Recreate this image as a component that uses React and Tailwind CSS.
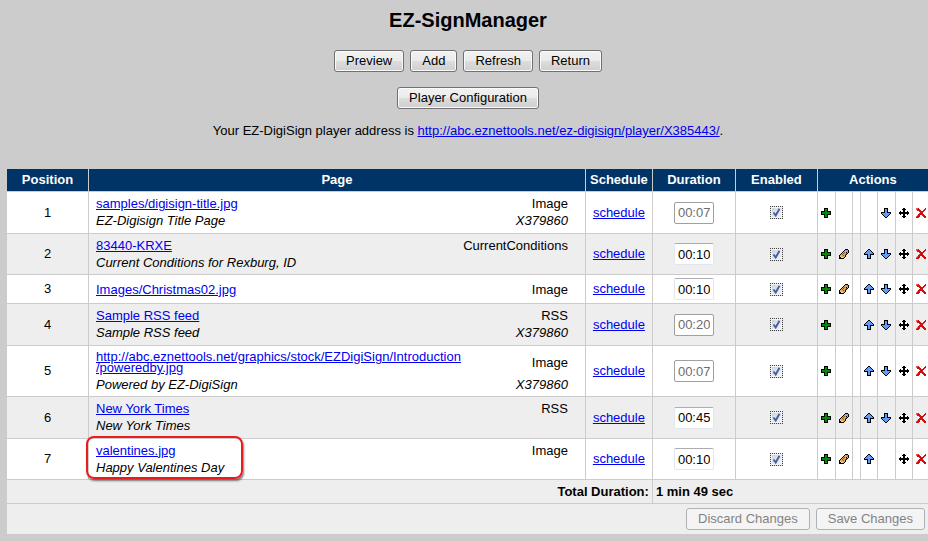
import React, { useState } from 'react';

const rows = [
  { name: 'samples/digisign-title.jpg', note: 'EZ-Digisign Title Page', type: 'Image', code: 'X379860', duration: '00:07', locked: true, down: true, height: 'h-[42px]' },
  { name: '83440-KRXE', note: 'Current Conditions for Rexburg, ID', type: 'CurrentConditions', duration: '00:10', up: true, down: true, height: 'h-[41px]' },
  { name: 'Images/Christmas02.jpg', type: 'Image', duration: '00:10', up: true, down: true, height: 'h-[29px]' },
  { name: 'Sample RSS feed', note: 'Sample RSS feed', type: 'RSS', code: 'X379860', duration: '00:20', locked: true, up: true, down: true, height: 'h-[42px]' },
  { name: 'http://abc.eznettools.net/graphics/stock/EZDigiSign/Introduction', tail: '/poweredby.jpg', note: 'Powered by EZ-DigiSign', type: 'Image', code: 'X379860', duration: '00:07', locked: true, up: true, down: true, height: 'h-[51px]' },
  { name: 'New York Times', note: 'New York Times', type: 'RSS', duration: '00:45', up: true, down: true, height: 'h-[42px]' },
  { name: 'valentines.jpg', note: 'Happy Valentines Day', type: 'Image', duration: '00:10', up: true, marked: true, height: 'h-[41px]' },
];

// Pixel maps for the 10px action icons, one letter per colour
const palette = {
  k: '#000000', g: '#008a00', b: '#5c9dff', r: '#d01010', d: '#ef5a5a',
  o: '#e8a850', y: '#f6d9a0', p: '#a890c8', s: '#d8a888', n: '#8a5a20', w: '#ffffff',
};

const pixels = {
  add: ['...kkkk...', '...kggk...', '...kggk...', 'kkkkggkkkk', 'kggggggggk', 'kggggggggk', 'kkkkggkkkk', '...kggk...', '...kggk...', '...kkkk...'],
  edit: ['......kkk.', '.....ksppk', '....kosspk', '...konoksk', '..konoonk.', '.konoonk..', 'kooonok...', 'kyooook...', 'kkyyok....', 'kkkkk.....'],
  up: ['....kk....', '...kbbk...', '..kbbbbk..', '.kbbbbbbk.', 'kbbbbbbbbk', 'kkkkbbkkkk', '...kbbk...', '...kbbk...', '...kbbk...', '...kkkk...'],
  down: ['...kkkk...', '...kbbk...', '...kbbk...', '...kbbk...', 'kkkkbbkkkk', 'kbbbbbbbbk', '.kbbbbbbk.', '..kbbbbk..', '...kbbk...', '....kk....'],
  move: ['....kk....', '...kkkk...', '..wwkkww..', '.kwwkkwwk.', 'kkkkkkkkkk', 'kkkkkkkkkk', '.kwwkkwwk.', '..wwkkww..', '...kkkk...', '....kk....'],
  remove: ['ddr......r', 'drrr....rr', '.rrrr..rr.', '...rrrrr..', '....rrr...', '...rrrr...', '..rrrrrr..', '.drr..rrr.', 'drrr...rrr', 'rrr.....rr'],
};

function PixelIcon({ name }) {
  return (
    <svg className="w-[10px] h-[10px] block" viewBox="0 0 10 10" shapeRendering="crispEdges" aria-hidden="true">
      {pixels[name].map((line, y) =>
        line.split('').map((c, x) => (c === '.' ? null : <rect key={`${x}-${y}`} x={x} y={y} width="1" height="1" fill={palette[c]} />))
      )}
    </svg>
  );
}

function Action({ name, label, show = true, last }) {
  return (
    <td className={`p-0 border-b border-[#ccc] ${last ? '' : 'border-r'}`}>
      {show && (
        <button type="button" aria-label={label} className={`block cursor-pointer ${last ? 'ml-auto mr-[2px]' : 'mx-auto'}`}>
          <PixelIcon name={name} />
        </button>
      )}
    </td>
  );
}

function Button({ children, disabled, className = '' }) {
  return (
    <button
      type="button"
      disabled={disabled}
      className={`h-[22px] px-[11px] rounded-[3px] border leading-5 ${
        disabled
          ? 'border-[#adb2b5] bg-[#f4f4f4] text-[#838383]'
          : 'border-[#707070] bg-[linear-gradient(#f2f2f2_0%,#ebebeb_49%,#dddddd_50%,#cfcfcf_100%)] shadow-[inset_0_0_0_1px_#fafafa]'
      } ${className}`}>
      {children}
    </button>
  );
}

function Link({ children }) {
  return <a href="#" className="text-[#0000ee] underline">{children}</a>;
}

function Row({ row, index }) {
  const [duration, setDuration] = useState(row.duration);
  const cell = 'border-r border-b border-[#ccc]';

  return (
    <tr className={`${row.height} ${index % 2 ? 'bg-[#eee]' : 'bg-white'}`}>
      <td className={`${cell} p-0 text-center`}>{index + 1}</td>
      <td className={`${cell} relative pl-[7px] pr-[17px] pb-0 ${row.note ? 'pt-[2px]' : 'pt-0'}`}>
        <div className="flex justify-between items-center leading-[11px]">
          <div>
            <Link>{row.name}{row.tail && <><br />{row.tail}</>}</Link>
          </div>
          <div>{row.type}</div>
        </div>
        {row.note && (
          <div className="flex justify-between mt-[3px] leading-[17px] italic">
            <span>{row.note}</span>
            <span>{row.code}</span>
          </div>
        )}
        {row.marked && (
          <div className="absolute -left-[3px] -top-[3px] w-[157px] h-[43px] rounded-lg border-2 border-[#e81c1c] shadow-[1px_2px_2px_rgba(0,0,0,0.5)] pointer-events-none" />
        )}
      </td>
      <td className={`${cell} p-0 text-center`}><Link>schedule</Link></td>
      <td className={`${cell} p-0 text-center`}>
        <input
          type="text"
          aria-label={`Duration of page ${index + 1}`}
          value={duration}
          disabled={row.locked}
          onChange={(e) => setDuration(e.target.value)}
          className={`block mx-auto w-10 h-[22px] px-[3px] rounded-[2px] border ${
            row.locked
              ? 'border-[#a0a0a0] bg-white text-[#6d6d6d]'
              : 'border-[#e2e6ee] border-t-[#abadb3] bg-white text-black'
          }`}
        />
      </td>
      <td className={`${cell} p-0 text-center`}>
        <label className="grid w-[13px] h-[13px] mx-auto">
          <input
            type="checkbox"
            defaultChecked
            aria-label={`Page ${index + 1} enabled`}
            className="peer appearance-none col-start-1 row-start-1 w-[13px] h-[13px] border border-dotted border-[#444] bg-[linear-gradient(135deg,#cdd2d8,#f6f6f6)] shadow-[inset_0_0_0_1px_#f4f4f4]"
          />
          <svg viewBox="0 0 13 13" className="col-start-1 row-start-1 w-[13px] h-[13px] invisible peer-checked:visible pointer-events-none" aria-hidden="true">
            <path d="M3.5 6.5 L5.7 9.5 L9.5 2.8" fill="none" stroke="#4360a5" strokeWidth="1.9" />
          </svg>
        </label>
      </td>
      <Action name="add" label="Add" />
      <Action name="edit" label="Edit" show={!row.locked} />
      <td className={`${cell} p-0`}></td>
      <Action name="up" label="Move up" show={!!row.up} />
      <Action name="down" label="Move down" show={!!row.down} />
      <Action name="move" label="Move to position" />
      <Action name="remove" label="Delete" last />
    </tr>
  );
}

export default function App() {
  const head = 'p-0 border-r border-b border-[#ccc]';

  return (
    <div className="min-h-screen bg-[#ccc] text-black text-[13px] font-['Liberation_Sans',Arial,sans-serif]">
      <header className="flex flex-col items-center pt-2 pl-2">
        <h1 className="text-xl leading-6 font-bold">EZ-SignManager</h1>
        <div className="flex gap-[6px] mt-[18px]">
          <Button>Preview</Button>
          <Button>Add</Button>
          <Button>Refresh</Button>
          <Button>Return</Button>
        </div>
        <Button className="mt-[15px]">Player Configuration</Button>
        <p className="mt-3 leading-5">
          Your EZ-DigiSign player address is <Link>http://abc.eznettools.net/ez-digisign/player/X385443/</Link>.
        </p>
      </header>

      <main className="pl-[7px] pt-[28px] pb-[7px]">
        <table className="w-full table-fixed border-separate border-spacing-0">
          <colgroup>
            <col className="w-[82px]" />
            <col />
            <col className="w-[67px]" />
            <col className="w-[83px]" />
            <col className="w-[82px]" />
            <col className="w-[18px]" />
            <col className="w-[17px]" />
            <col className="w-[8px]" />
            <col className="w-[17px]" />
            <col className="w-[18px]" />
            <col className="w-[17px]" />
            <col className="w-[15px]" />
          </colgroup>
          <thead>
            <tr className="h-[23px] bg-[#003366] text-white">
              <th className={head}>Position</th>
              <th className={head}>Page</th>
              <th className={head}>Schedule</th>
              <th className={head}>Duration</th>
              <th className={head}>Enabled</th>
              <th colSpan={7} className="p-0 border-b border-[#ccc]">Actions</th>
            </tr>
          </thead>
          <tbody>
            {rows.map((row, i) => <Row key={row.name} row={row} index={i} />)}
          </tbody>
          <tfoot className="bg-[#eee]">
            <tr className="h-6 font-bold">
              <td colSpan={3} className="p-0 pr-[3px] border-r border-b border-[#ccc] text-right">Total Duration:</td>
              <td colSpan={9} className="p-0 pl-[3px] border-b border-[#ccc]">1 min 49 sec</td>
            </tr>
            <tr className="h-[30px]">
              <td colSpan={12} className="p-0 pr-[3px]">
                <div className="flex justify-end gap-[6px]">
                  <Button disabled>Discard Changes</Button>
                  <Button disabled>Save Changes</Button>
                </div>
              </td>
            </tr>
          </tfoot>
        </table>
      </main>
    </div>
  );
}
